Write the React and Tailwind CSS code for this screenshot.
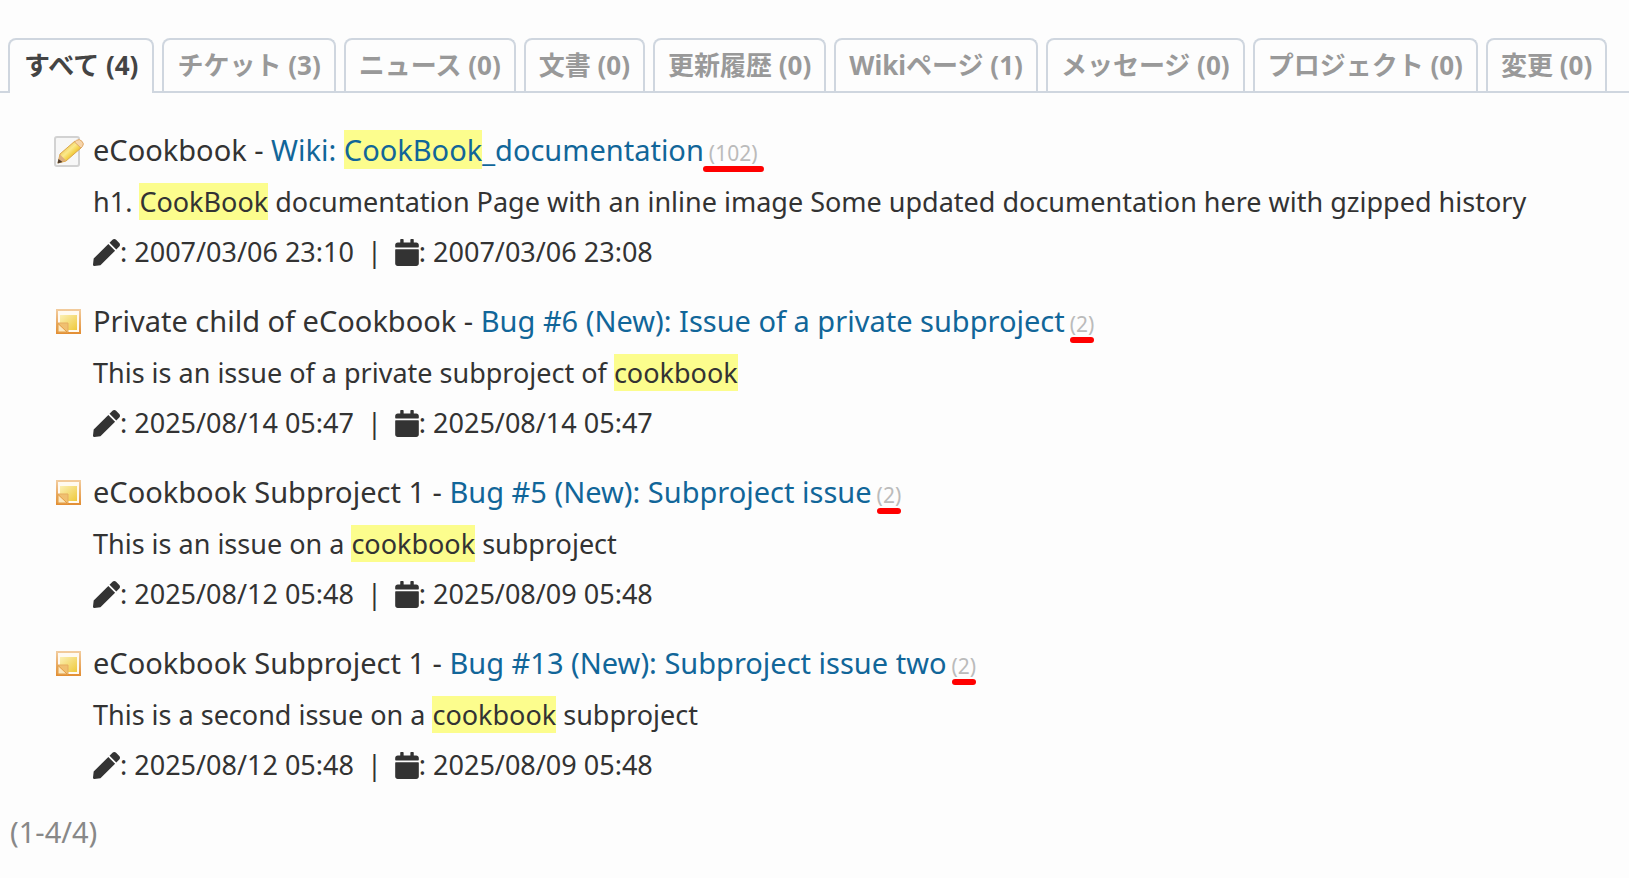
import { FaPen, FaCalendar } from "react-icons/fa";

const tabs = [
  ["すべて", 4],
  ["チケット", 3],
  ["ニュース", 0],
  ["文書", 0],
  ["更新履歴", 0],
  ["Wikiページ", 1],
  ["メッセージ", 0],
  ["プロジェクト", 0],
  ["変更", 0],
];

const results = [
  {
    icon: "wiki",
    project: "eCookbook",
    title: ["Wiki: ", "CookBook", "_documentation"],
    count: 102,
    text: ["h1. ", "CookBook", " documentation Page with an inline image Some updated documentation here with gzipped history"],
    updated: "2007/03/06 23:10",
    created: "2007/03/06 23:08",
  },
  {
    icon: "issue",
    project: "Private child of eCookbook",
    title: ["Bug #6 (New): Issue of a private subproject"],
    count: 2,
    text: ["This is an issue of a private subproject of ", "cookbook"],
    updated: "2025/08/14 05:47",
    created: "2025/08/14 05:47",
  },
  {
    icon: "issue",
    project: "eCookbook Subproject 1",
    title: ["Bug #5 (New): Subproject issue"],
    count: 2,
    text: ["This is an issue on a ", "cookbook", " subproject"],
    updated: "2025/08/12 05:48",
    created: "2025/08/09 05:48",
  },
  {
    icon: "issue",
    project: "eCookbook Subproject 1",
    title: ["Bug #13 (New): Subproject issue two"],
    count: 2,
    text: ["This is a second issue on a ", "cookbook", " subproject"],
    updated: "2025/08/12 05:48",
    created: "2025/08/09 05:48",
  },
];

function WikiIcon() {
  return (
    <svg viewBox="0 0 32 32" className="size-8 shrink-0" aria-hidden="true">
      <defs>
        <linearGradient id="pencil" x1="0" y1="0" x2="1" y2="1">
          <stop offset="0.2" stopColor="#e9b93c" />
          <stop offset="0.45" stopColor="#fbe98c" />
          <stop offset="0.6" stopColor="#f3cf45" />
          <stop offset="0.9" stopColor="#c98a22" />
        </linearGradient>
      </defs>
      <rect x="2" y="2" width="24" height="29" rx="2" fill="#f7f7f7" stroke="#d2d2d2" strokeWidth="2" />
      <path d="M5 28 L7 19 L22 6 L28.500 12.500 L13 26 Z" fill="url(#pencil)" stroke="#dba74c" strokeWidth="1" />
      <path d="M5 28 L7 19.500 L13 25.500 Z" fill="#dcae80" />
      <path d="M4.500 28.500 L5.500 24 L9.500 27 Z" fill="#4f3d30" />
      <path d="M21.500 7 L23.500 5.300 Q26.500 3.500 29 6.300 Q31.500 9 29.500 11.300 L28 13 Z" fill="#f6d5ab" stroke="#e0a968" strokeWidth="1" />
    </svg>
  );
}

function IssueIcon() {
  return (
    <svg viewBox="0 0 32 32" className="size-8 shrink-0" aria-hidden="true">
      <defs>
        <linearGradient id="note" x1="0" y1="0" x2="1" y2="1">
          <stop offset="0" stopColor="#fbf0b4" />
          <stop offset="1" stopColor="#efc93c" />
        </linearGradient>
        <linearGradient id="noteEdge" x1="0" y1="0" x2="0" y2="1">
          <stop offset="0" stopColor="#f2cb9c" />
          <stop offset="1" stopColor="#e38f35" />
        </linearGradient>
      </defs>
      <rect x="4" y="4" width="23" height="23" fill="#fffaf0" stroke="url(#noteEdge)" strokeWidth="2" />
      <rect x="7" y="9" width="17" height="15" fill="url(#note)" />
      <path d="M5 17 H15 V26 H5 Z" fill="#f0c070" stroke="#e6ad60" strokeWidth="1" />
      <path d="M5 17.500 L14 26 H5 Z" fill="#fbe9c0" stroke="#e39a42" strokeWidth="1" />
    </svg>
  );
}

function Highlighted({ parts }) {
  return parts.map((part, i) =>
    i === 1 ? (
      <mark key={i} className="bg-[#fcfd8d] text-inherit">
        {part}
      </mark>
    ) : (
      part
    )
  );
}

function Result({ item }) {
  return (
    <li className="flex gap-2">
      <div className="flex h-14 items-center">{item.icon === "wiki" ? <WikiIcon /> : <IssueIcon />}</div>
      <div className="min-w-0 flex-1">
        <h3 className="flex items-baseline gap-[5px] text-[29px] leading-[54px]">
          <span>
            {item.project} -{" "}
            <a href="#result" className="text-[#116699]">
              <Highlighted parts={item.title} />
            </a>
          </span>
          <span className="relative text-[21px] leading-none text-[#bbbbbb]">
            ({item.count})
            <span
              className={
                item.count > 99
                  ? "absolute -inset-x-1.5 -bottom-2 h-[6px] rounded-full bg-[#ff0000]"
                  : "absolute inset-x-0 -bottom-2 h-[6px] rounded-full bg-[#ff0000]"
              }
            />
          </span>
        </h3>
        <p className="text-[27px] leading-[50px]">
          <Highlighted parts={item.text} />
        </p>
        <p className="flex items-center text-[27px] leading-[50px]">
          <FaPen className="size-[27px]" aria-label="更新日" />
          <span className="whitespace-pre">: {item.updated}</span>
          <span className="pr-[13px] pl-[13px]">|</span>
          <FaCalendar className="h-[27px] w-6" aria-label="作成日" />
          <span className="whitespace-pre">: {item.created}</span>
        </p>
      </div>
    </li>
  );
}

export default function App() {
  return (
    <main className="min-h-screen bg-[#fdfdfd] pt-[38px] pb-4 font-['Noto_Sans','Noto_Sans_CJK_JP',sans-serif] text-[#333333]">
      <nav className="flex gap-2 border-b-2 border-[#cfd6df] pl-2 text-[26px] font-bold whitespace-nowrap">
        {tabs.map(([name, count], i) => (
          <a
            key={name}
            href="#results"
            className={
              i === 0
                ? "-mb-[2px] h-[55px] rounded-t-lg border-2 border-b-0 border-[#cfd6df] bg-[#fdfdfd] px-[14px] leading-[50px] text-[#444444]"
                : "h-[53px] rounded-t-lg border-2 border-b-0 border-[#cfd6df] px-[13px] leading-[50px] text-[#999999]"
            }
          >
            {name} ({count})
          </a>
        ))}
      </nav>
      <ul className="flex flex-col gap-[17px] pt-[30px] pl-[53px]">
        {results.map((item, i) => (
          <Result key={i} item={item} />
        ))}
      </ul>
      <p className="pt-[22px] pl-[10px] text-[29px] leading-[40px] text-[#888888]">(1-4/4)</p>
    </main>
  );
}
